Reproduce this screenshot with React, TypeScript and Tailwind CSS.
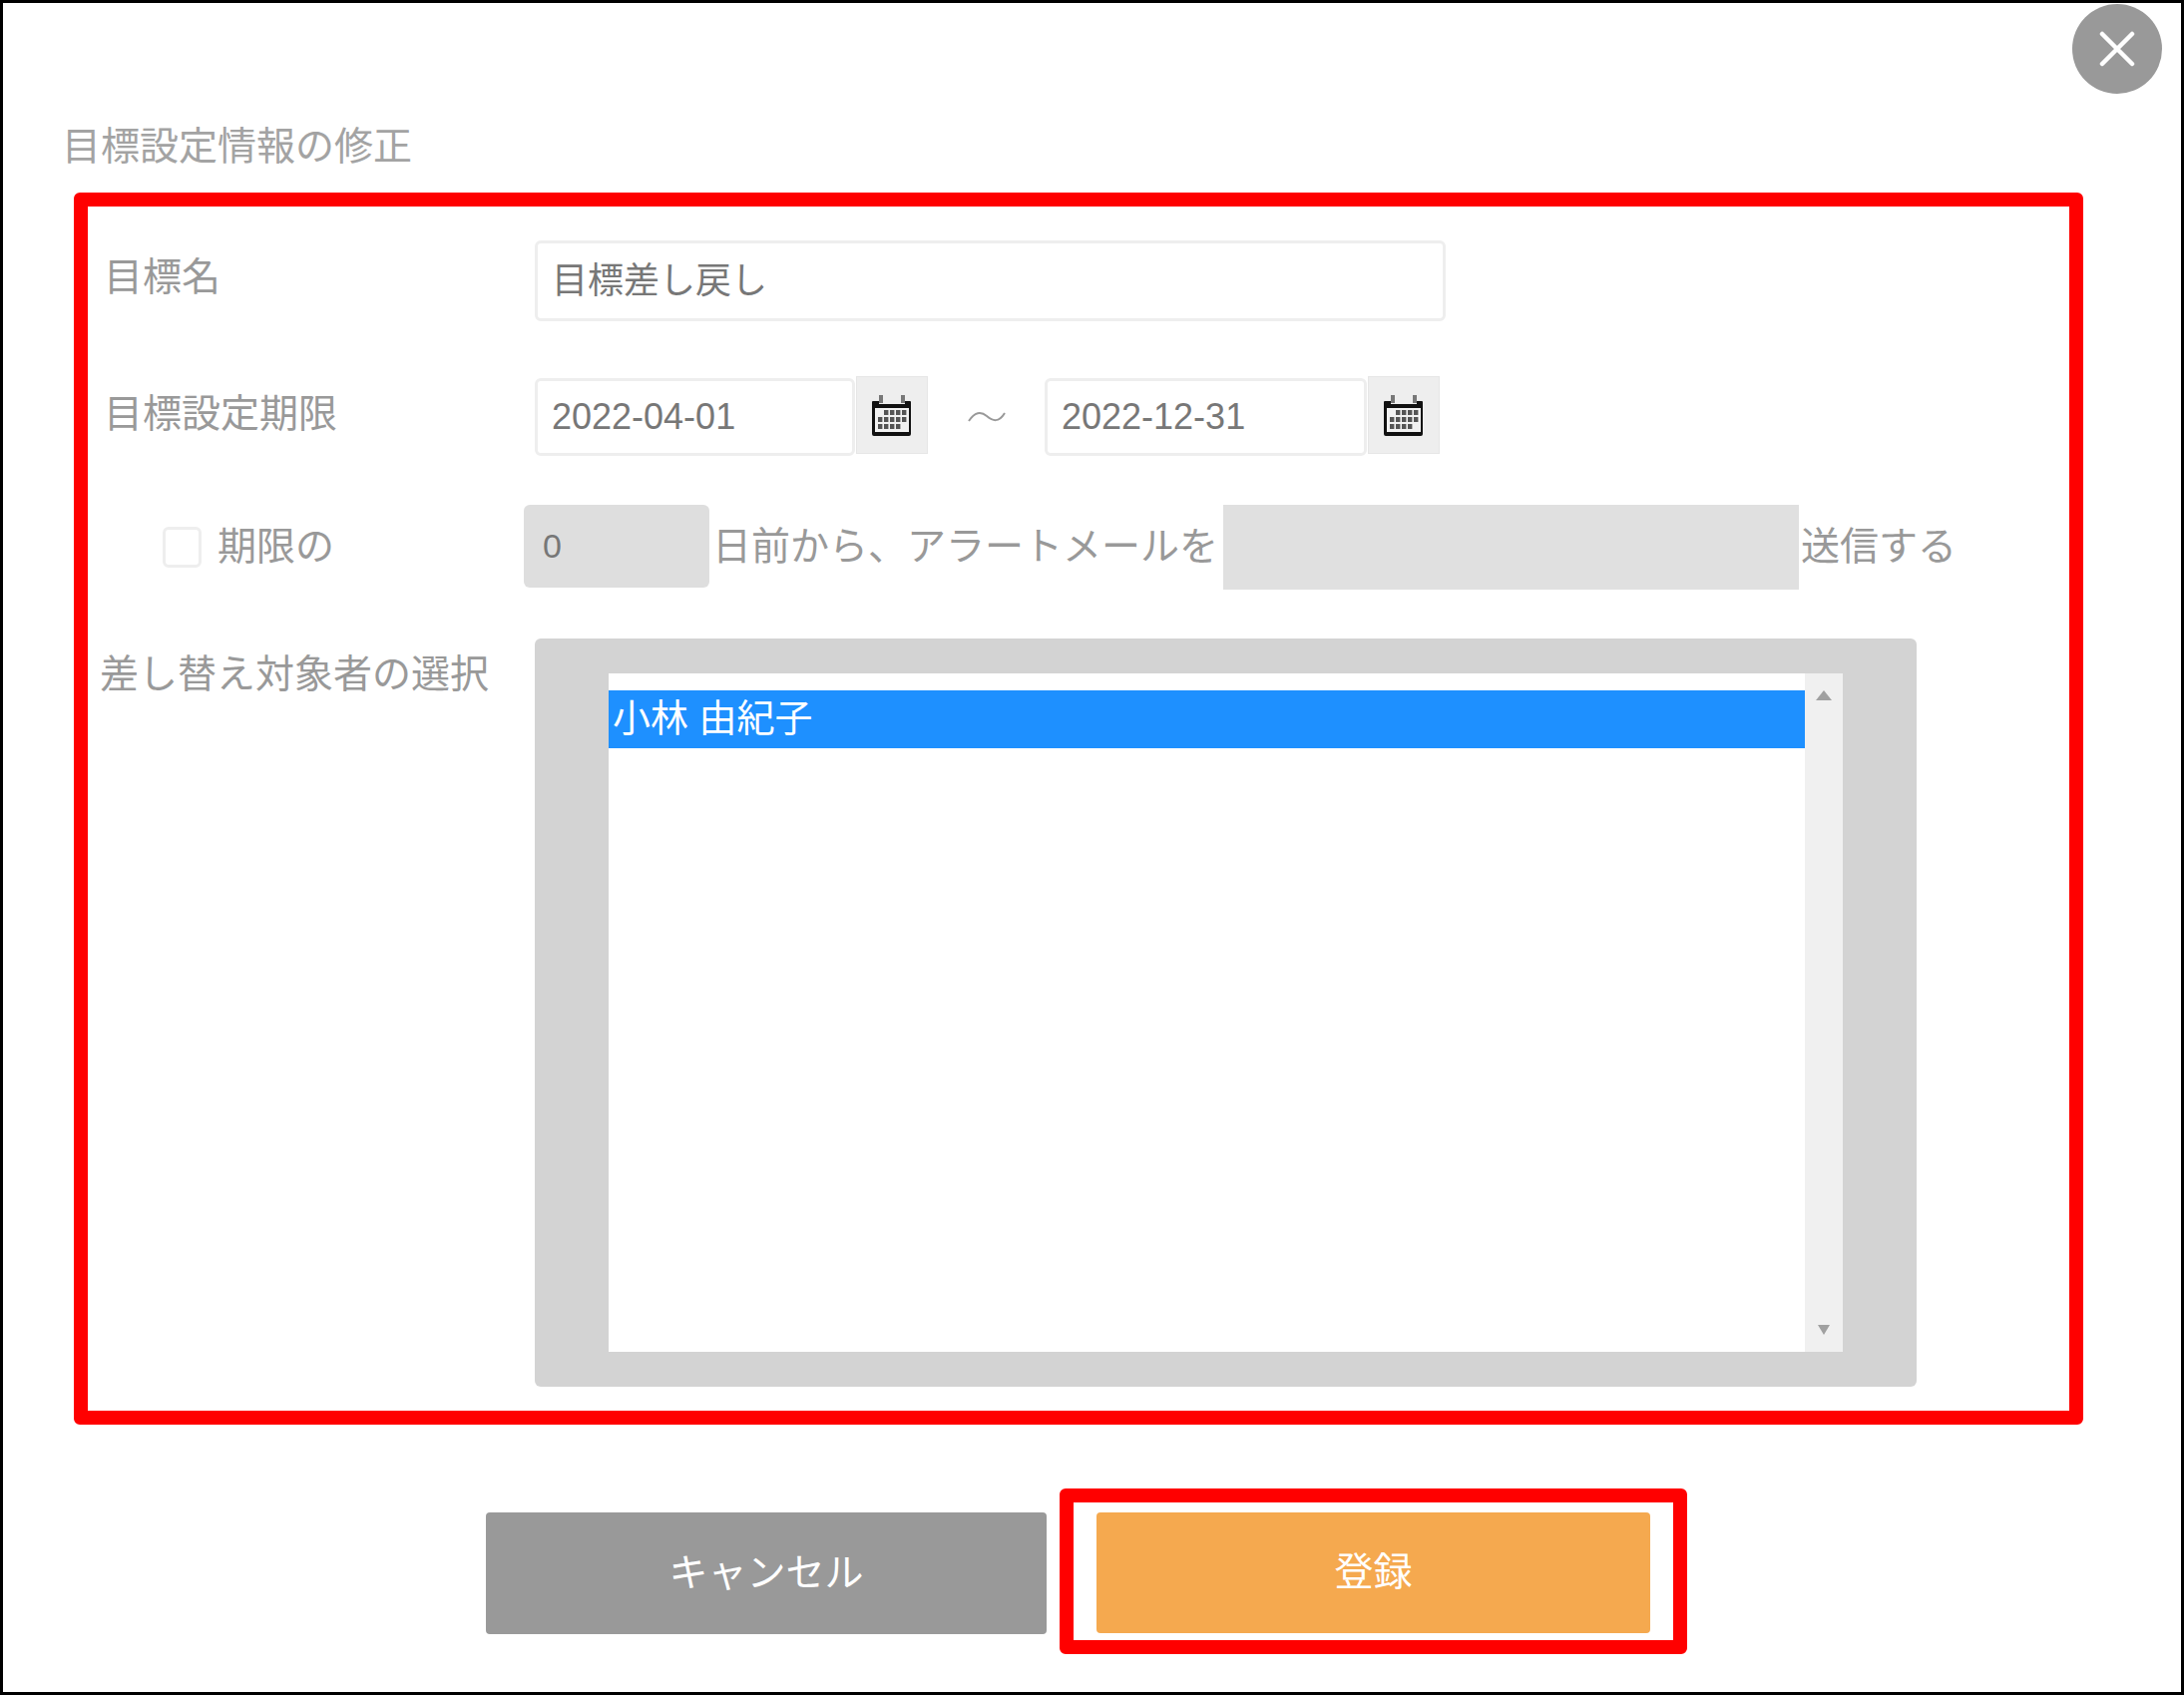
const sans = '"Liberation Sans", "Noto Sans CJK JP", sans-serif';

const CalendarIcon = () => {
  const cols = [6, 12, 18, 24, 30];
  const rows = [15, 22, 29];
  return (
    <svg width="40" height="41" viewBox="0 0 40 41">
      <path d="M2 6h5v3h26V6h5a1 1 0 0 1 1 1v32a2 2 0 0 1-2 2H2a2 2 0 0 1-2-2V7a1 1 0 0 1 1-1z" fill="#111" />
      <rect x="7" y="0" width="4" height="8" fill="#777" />
      <rect x="29" y="0" width="4" height="8" fill="#777" />
      <rect x="3" y="13" width="34" height="24" fill="#f2f2f2" />
      {rows.map((y, r) =>
        cols.map((x, c) =>
          r === 0 && c === 0 ? null : r === 2 && c === 4 ? null : (
            <rect key={`${r}-${c}`} x={x} y={y} width="4.4" height="5" fill="#555" />
          ),
        ),
      )}
    </svg>
  );
};

const DateField = ({ value, width }: { value: string; width: string }) => (
  <div className="flex items-start">
    <div className={`${width} h-[78px] flex items-center pl-[14px] border-[3px] border-[#eeeeee] rounded-md text-[36px] text-[#777777]`}>
      {value}
    </div>
    <div className="ml-[1px] w-[72px] h-[78px] -mt-[2px] bg-[#eeeeee] border border-[#e6e6e6] flex items-center justify-center">
      <CalendarIcon />
    </div>
  </div>
);

export default function App() {
  return (
    <div
      className="relative w-[2189px] h-[1699px] border-[3px] border-black bg-white overflow-hidden"
      style={{ fontFamily: sans }}
    >
      <button className="absolute top-[1px] right-[19px] w-[90px] h-[90px] rounded-full bg-[#999999] flex items-center justify-center">
        <svg width="36" height="36" viewBox="0 0 36 36">
          <path d="M3 3l30 30M33 3L3 33" stroke="#fff" strokeWidth="4.5" strokeLinecap="round" />
        </svg>
      </button>

      <h1 className="ml-[59px] pt-[116px] h-[190px] text-[39px] leading-[56px] font-normal text-[#a3a3a3]">
        目標設定情報の修正
      </h1>

      <section className="ml-[71px] w-[2014px] h-[1235px] border-[14px] border-[#ff0000] rounded-md">
        <div className="mt-[17px] pt-[17px] flex items-start">
          <div className="w-[448px] pl-[16px] text-[39px] leading-[74px] text-[#999999]">目標名</div>
          <div className="w-[913px] h-[81px] flex items-center pl-[14px] border-[3px] border-[#eeeeee] rounded-md text-[36px] text-[#777777]">
            目標差し戻し
          </div>
        </div>

        <div className="mt-[57px] flex items-start">
          <div className="w-[448px] pl-[16px] text-[39px] leading-[72px] text-[#999999]">目標設定期限</div>
          <DateField value="2022-04-01" width="w-[321px]" />
          <div className="w-[117px] h-[78px] flex items-center justify-center">
            <svg width="38" height="14" viewBox="0 0 38 14">
              <path d="M1 11C7 2 13 1 19 6s12 7 18-3" fill="none" stroke="#999" strokeWidth="2" />
            </svg>
          </div>
          <DateField value="2022-12-31" width="w-[323px]" />
        </div>

        <div className="mt-[49px] h-[85px] flex items-center text-[39px] text-[#999999]">
          <div className="ml-[75px] w-[39px] h-[41px] border-[3px] border-[#eeeeee] rounded-md" />
          <span className="ml-[16px] w-[307px]">期限の</span>
          <div className="w-[186px] h-[83px] self-start flex items-center pl-[19px] bg-[#dedede] rounded-md text-[34px] text-[#777777]">
            0
          </div>
          <span className="ml-[3px] w-[512px] whitespace-nowrap">日前から、アラートメールを</span>
          <div className="w-[577px] h-[85px] bg-[#e0e0e0]" />
          <span className="ml-[2px] whitespace-nowrap">送信する</span>
        </div>

        <div className="mt-[49px] flex items-start">
          <div className="w-[448px] pl-[12px] text-[39px] leading-[72px] text-[#999999] whitespace-nowrap">差し替え対象者の選択</div>
          <div className="w-[1385px] h-[750px] bg-[#d3d3d3] rounded-md pt-[35px] pl-[74px]">
            <div className="w-[1237px] h-[680px] flex bg-white">
              <div className="w-[1199px] pt-[17px]">
                <div className="h-[58px] bg-[#1e90ff] pl-[4px] text-[38px] leading-[56px] text-white whitespace-nowrap">
                  小林 由紀子
                </div>
              </div>
              <div className="w-[38px] bg-[#f0f0f0] flex flex-col items-center justify-between pt-[17px] pb-[17px]">
                <svg width="16" height="10" viewBox="0 0 16 10">
                  <path d="M8 0l8 10H0z" fill="#a0a0a0" />
                </svg>
                <svg width="12" height="10" viewBox="0 0 12 10">
                  <path d="M0 0h12L6 10z" fill="#a0a0a0" />
                </svg>
              </div>
            </div>
          </div>
        </div>
      </section>

      <div className="mt-[64px] ml-[484px] flex items-start">
        <button className="mt-[24px] w-[562px] h-[122px] bg-[#999999] rounded text-[39px] text-white">
          キャンセル
        </button>
        <div className="ml-[13px] w-[629px] h-[166px] border-[14px] border-[#ff0000] rounded-md px-[23px] pt-[10px]">
          <button className="w-full h-[121px] bg-[#f5a94f] rounded text-[39px] text-white">登録</button>
        </div>
      </div>
    </div>
  );
}
